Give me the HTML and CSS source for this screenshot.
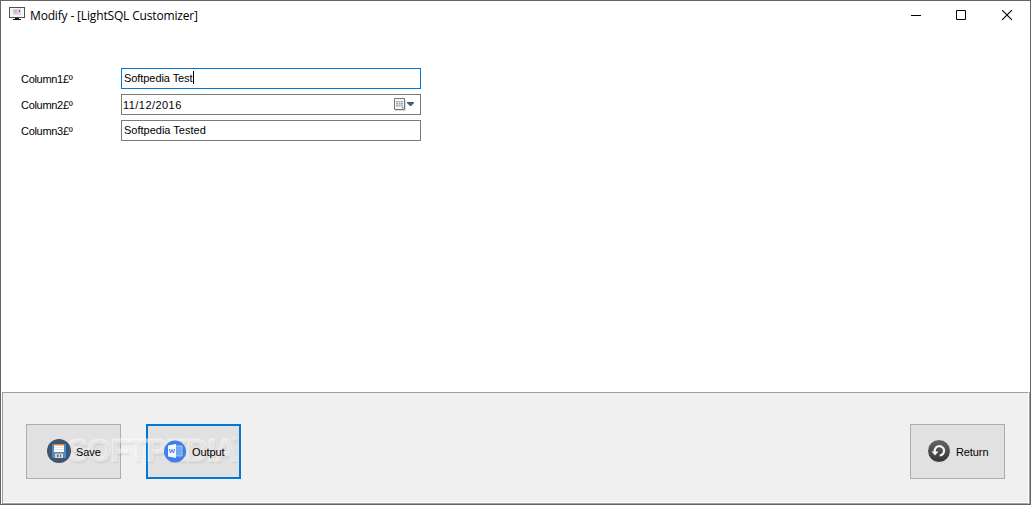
FILE: index.html
```
<!DOCTYPE html>
<html lang="en">
<head>
  <meta charset="UTF-8">
  <title>Modify - [LightSQL Customizer]</title>
  <link rel="stylesheet" href="styles.css">
</head>
<body>
  <div class="window">
    <header class="titlebar">
      <svg class="app-icon" width="16" height="14" viewBox="0 0 16 14">
        <rect x="0.5" y="0.5" width="15" height="10" fill="#f5f5f5" stroke="#55504e"/>
        <rect x="4" y="2" width="8" height="6" fill="#d9d6dc"/>
        <path d="M5 3h3v3H5z" fill="#b9bcc9"/>
        <path d="M10 3h1v2h-1z" fill="#c33d42"/>
        <path d="M6 11h4v1h2v1H4v-1h2z" fill="#111"/>
      </svg>
      <span class="title">Modify - [LightSQL Customizer]</span>
      <div class="controls">
        <svg class="minimize" width="10" height="10" viewBox="0 0 10 10"><path d="M0 5.5h10" stroke="#000"/></svg>
        <svg width="10" height="10" viewBox="0 0 10 10"><path d="M.5.5h9v9h-9z" fill="none" stroke="#000"/></svg>
        <svg width="10" height="10" viewBox="0 0 10 10"><path d="M0 0l10 10M10 0L0 10" stroke="#000" stroke-width="1.1"/></svg>
      </div>
    </header>

    <main class="form">
      <div class="row">
        <span class="label">Column1£º</span>
        <div class="field active"><span>Softpedia Test</span><span class="caret"></span></div>
      </div>
      <div class="row">
        <span class="label">Column2£º</span>
        <div class="field date">
          <span>11/12/2016</span>
          <svg class="calendar" width="21" height="13" viewBox="0 0 21 13">
            <path d="M1 12.5h10.5V2" fill="none" stroke="#ddd"/>
            <path d="M.5.5h10v11H.5z" fill="#f4f6f8" stroke="#7d7270"/>
            <path d="M2 3h7v6H2z" fill="#a6b0bf"/>
            <path d="M2 4.5h7M2 6.5h7M2 8.5h7M4.5 3v6M6.5 3v6" stroke="#e4e8ee" stroke-width=".6"/>
            <path d="M8 11V9h2z" fill="#8b807c"/>
            <path d="M13 4h7v1l-3 3h-1l-3-3z" fill="#415a85"/>
          </svg>
        </div>
      </div>
      <div class="row">
        <span class="label">Column3£º</span>
        <div class="field"><span>Softpedia Tested</span></div>
      </div>
    </main>

    <footer class="panel">
      <button class="btn">
        <svg width="24" height="24" viewBox="0 0 24 24">
          <circle cx="12" cy="12" r="12" fill="#40536f"/>
          <path d="M5 5h14v14H6l-1-1z" fill="#4a8ac7"/>
          <path d="M7 5h10v8H7z" fill="#fff"/>
          <path d="M7 5h10v1.5H7z" fill="#ee8130"/>
          <path d="M7 8.5h10M7 10.5h10" stroke="#e6e9ec"/>
          <path d="M8 14.5h8V19H8z" fill="#ddd6ca"/>
          <path d="M10 15.5h1.5V18H10zM13 15.5h1V18h-1z" fill="#526579"/>
        </svg>
        <span>Save</span>
      </button>
      <button class="btn focused">
        <svg width="24" height="24" viewBox="0 0 24 24">
          <circle cx="12" cy="12.5" r="11" fill="#3f7fe6"/>
          <path d="M12 7h7v10h-7z" fill="#73a5f3" stroke="#b9d2fb" stroke-width=".8"/>
          <path d="M5 6.5L13 5v14l-8-1.500z" fill="#f5f8ff"/>
          <path d="M6.500 10l1 4L9 10.500l1.500 3.500 1-4" fill="none" stroke="#3f7fe6"/>
        </svg>
        <span>Output</span>
      </button>
      <button class="btn return">
        <svg width="24" height="24" viewBox="0 0 24 24">
          <defs>
            <linearGradient id="dark" x1="0" y1="0" x2="0" y2="1">
              <stop offset="0" stop-color="#666"/>
              <stop offset="1" stop-color="#353535"/>
            </linearGradient>
          </defs>
          <circle cx="12" cy="12" r="11.5" fill="url(#dark)" stroke="#f2f2f2"/>
          <path d="M8 13.5a4.700 4.700 0 1 1 4.700 3" fill="none" stroke="#f4f4f4" stroke-width="2.2"/>
          <path d="M4.500 12.500h7L8 16.500z" fill="#f4f4f4"/>
        </svg>
        <span>Return</span>
      </button>
      <div class="watermark">SOFTPEDIA<span class="mark">◈</span></div>
    </footer>
  </div>
</body>
</html>
```
FILE: styles.css
```
* {
  box-sizing: border-box;
}

body {
  margin: 0;
  background: #fff;
  color: #000;
  font: 11px/13px "Liberation Sans", Arial, sans-serif;
}

.window {
  display: flex;
  flex-direction: column;
  width: 1031px;
  height: 505px;
  border: 1px solid #646464;
}

.titlebar {
  display: flex;
  height: 29px;
  padding: 6px 18px 0 8px;
}

.title {
  margin-left: 5px;
  font: 12px/18px "Open Sans", "Noto Sans", sans-serif;
  letter-spacing: -0.16px;
}

.controls {
  display: flex;
  gap: 36px;
  margin: 3px 0 0 auto;
}

.minimize {
  margin-right: -1px;
}

.form {
  display: flex;
  flex: 1;
  flex-direction: column;
  gap: 5px;
  padding: 38px 20px 0;
}

.row {
  display: flex;
  height: 21px;
}

.label {
  width: 100px;
  padding-top: 5px;
  letter-spacing: -0.3px;
}

.field {
  display: flex;
  width: 300px;
  padding: 3px 2px 0;
  border: 1px solid #7a7a7a;
  background: #fff;
}

.field.active {
  padding-top: 2px;
  border-color: #0078d7;
  line-height: 15px;
  letter-spacing: -0.07px;
}

.field.date {
  padding: 3px 5px 0 1px;
  line-height: 14px;
  letter-spacing: 0.45px;
}

.calendar {
  margin-left: auto;
}

.caret {
  width: 1px;
  height: 13px;
  background: #000;
}

/* bottom button bar */
.panel {
  position: relative;
  display: flex;
  gap: 25px;
  height: 112px;
  margin: 0 1px;
  padding: 31px 23px 0;
  border: 1px solid #a0a0a0;
  border-right-color: #fff;
  box-shadow: inset 0 -1px #fff, 1px 0 #a0a0a0;
  background: #f0f0f0;
}

.btn {
  display: flex;
  align-items: center;
  width: 95px;
  height: 55px;
  padding: 0 0 1px 20px;
  border: 1px solid #adadad;
  background: #e1e1e1;
  color: #000;
  font: inherit;
  letter-spacing: -0.1px;
}

.btn svg {
  flex: none;
  margin-right: 5px;
}

.btn.focused {
  padding-left: 15px;
  border: 2px solid #0078d7;
}

.btn.return {
  margin-left: auto;
  padding-left: 16px;
}

.btn svg,
.btn span {
  position: relative;
  z-index: 2;
}

.btn span {
  top: 1px;
}

.watermark {
  position: absolute;
  left: 64px;
  top: 39px;
  color: rgba(255, 255, 255, 0.4);
  font: bold 32px/36px "Liberation Sans", Arial, sans-serif;
  letter-spacing: -1.6px;
  text-shadow: 1px 2px 2px rgba(0, 0, 0, 0.08);
  -webkit-text-stroke: 1.5px rgba(255, 255, 255, 0.3);
  pointer-events: none;
}

.mark {
  position: absolute;
  left: 164px;
  top: 1px;
  font: 9px/10px "DejaVu Sans", sans-serif;
  letter-spacing: 0;
  -webkit-text-stroke: 0;
}
```
